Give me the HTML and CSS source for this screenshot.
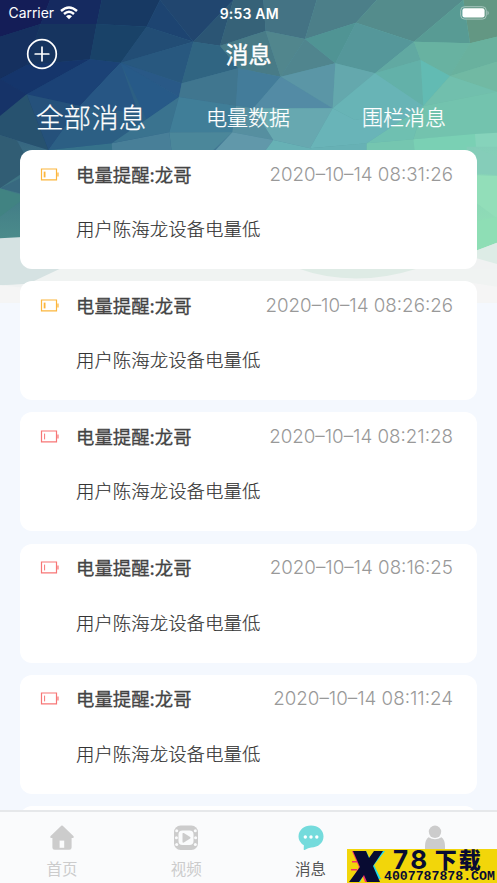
FILE: index.html
```html
<!DOCTYPE html>
<html lang="zh-CN">
<head>
<meta charset="utf-8">
<title>消息</title>
<link rel="stylesheet" href="styles.css">
</head>
<body>
<div class="phone">
<svg class="mesh" viewBox="0 0 1491 960" preserveAspectRatio="none" aria-hidden="true">
<defs>
<linearGradient id="base" x1="0" y1="0" x2="1" y2="0"><stop offset="0" stop-color="#1c3c6a"/><stop offset=".25" stop-color="#265680"/><stop offset=".5" stop-color="#4b839a"/><stop offset=".75" stop-color="#64aeab"/><stop offset="1" stop-color="#72bda5"/></linearGradient>
<linearGradient id="left" x1="0" y1="0" x2="0" y2="1"><stop offset="0" stop-color="#356480"/><stop offset="1" stop-color="#4b8c8b"/></linearGradient>
<linearGradient id="right" x1="0" y1="0" x2="0" y2="1"><stop offset="0" stop-color="#83cdb8"/><stop offset="1" stop-color="#94e2b5"/></linearGradient>
</defs>
<rect width="1491" height="960" fill="#f4f8fe"/>
<rect width="1491" height="500" fill="url(#base)"/>
<g>
<path fill="#141d57" d="M0 0H150L122 72 0 110z"/>
<path fill="#152a60" d="M150 0H305L290 72H122z"/>
<path fill="#15305f" d="M0 110L122 72 80 195 0 237z"/>
<path fill="#16345f" d="M122 72H290L270 178 80 195z"/>
<path fill="#173963" d="M305 0H480L440 80 290 72z"/>
<path fill="#194268" d="M290 72L440 80 362 188 270 178z"/>
<path fill="#1d4471" d="M480 0L580 125 440 80z"/>
<path fill="#21466f" d="M480 0H700L580 125z"/>
<path fill="#224d75" d="M440 80L580 125 362 188z"/>
<path fill="#15356b" d="M0 237L80 195 270 178 80 283z"/>
<path fill="#163368" d="M0 237L80 283 0 348z"/>
<path fill="#1b4276" d="M270 178L362 188 240 318 80 283z"/>
<path fill="#25517b" d="M80 283L240 318 145 450z"/>
<path fill="#27526f" d="M0 348L80 283 145 450 0 405z"/>
<path fill="#28587f" d="M362 188L580 125 545 250z"/>
<path fill="#295987" d="M362 188L545 250 537 291z"/>
<path fill="#275a88" d="M362 188L537 291 335 430 145 450 240 318z"/>
<path fill="#2c5f84" d="M362 188L440 360 335 430 145 450 240 318z"/>
<path fill="#275684" d="M362 188L415 340 240 318z"/>
<path fill="#3a738f" d="M537 291L508 397 335 430z"/>
<path fill="#2b5574" d="M700 0L660 137 580 125z"/>
<path fill="#366278" d="M700 0H790L797 93 660 137z"/>
<path fill="#447384" d="M790 0H950L915 117 797 93z"/>
<path fill="#4c7f89" d="M950 0H1130L1068 68 915 117z"/>
<path fill="#548c8c" d="M1130 0H1390L1242 125 1068 68z"/>
<path fill="#639783" d="M1390 0H1491V110L1410 130z"/>
<path fill="#589b94" d="M1390 0L1410 130 1242 125z"/>
<path fill="#306582" d="M580 125L660 137 715 205 545 250z"/>
<path fill="#487b87" d="M660 137L797 93 842 230 715 205z"/>
<path fill="#51868d" d="M797 93L915 117 842 230z"/>
<path fill="#50858e" d="M915 117L1006 190 842 230z"/>
<path fill="#509494" d="M915 117L1068 68 1006 190z"/>
<path fill="#55979a" d="M1068 68L1242 125 1125 220 1006 190z"/>
<path fill="#40768f" d="M545 250L715 205 708 318 537 291z"/>
<path fill="#437c9a" d="M715 205L842 230 760 325 708 318z"/>
<path fill="#5b96a6" d="M842 230L1006 190 998 325z"/>
<path fill="#538ba5" d="M842 230L998 325 760 325z"/>
<path fill="#64a8ad" d="M1006 190L1125 220 998 325z"/>
<path fill="#61a9a2" d="M1242 125L1262 180 1125 220z"/>
<path fill="#68b2a1" d="M1242 125L1410 130 1350 228 1262 180z"/>
<path fill="#69b19e" d="M1410 130L1491 110V185L1350 228z"/>
<path fill="#71b9a3" d="M1491 185V275L1350 228z"/>
<path fill="#63b1a9" d="M1125 220L1262 180 1270 318z"/>
<path fill="#62bbb3" d="M1262 180L1350 228 1270 318z"/>
<path fill="#68b4b6" d="M1125 220L1270 318 1065 360 998 325z"/>
<path fill="#71bfad" d="M1350 228L1491 275 1270 318z"/>
<path fill="#73c3ae" d="M1270 318L1491 275V400L1240 418z"/>
<path fill="#6fc0b1" d="M1270 318L1240 418 1100 430z"/>
<path fill="#407e98" d="M537 291L708 318 697 397H508z"/>
<path fill="#568fa0" d="M708 318L760 325 820 420 697 397z"/>
<path fill="#67a8b0" d="M760 325H998L930 445 820 420z"/>
<path fill="#69b4b8" d="M998 325L1065 360 1270 318 1100 430 930 445z"/>
<path fill="#36728b" d="M145 450L335 430 350 500H90z"/>
<path fill="#487f98" d="M335 430L508 397 520 500H340z"/>
<path fill="#4b879a" d="M508 397H697L630 460 520 500z"/>
<path fill="#6198aa" d="M697 397L820 420 760 500H600z"/>
<path fill="#67b1b5" d="M820 420L930 445 1100 430V500H760z"/>
<path fill="#75c6b0" d="M1100 430L1240 418 1290 500H1100z"/>
<path fill="#7ad0b4" d="M1240 418L1425 402 1491 500H1250z"/>
<path fill="#86d3bb" d="M1425 402L1491 398V530L1430 470z"/>
</g>
<path fill="url(#left)" d="M0 405L145 450 150 720H0z"/>
<path fill="#315d74" d="M0 405L50 421 95 500 0 565z"/>
<path fill="#386980" d="M0 565L80 525V585z"/>
<path fill="#418382" d="M0 565L80 590 0 650z"/>
<path fill="url(#right)" d="M1400 440H1491V760H1400z"/>
<path fill="#85cdb9" d="M1420 440L1491 470V525L1420 520z"/>
<path fill="#92deb9" d="M1420 525L1491 528V655L1430 610z"/>
<path fill="#8edeb5" d="M1420 665L1491 650V735L1420 760z"/>
<path fill="#d5e2e2" d="M0 715L180 705 600 740 1200 840 1491 728V870H0z"/>
<path fill="#ddece6" d="M1380 770L1491 728V800L1400 775z"/>
<path fill="#f0f2f2" d="M0 855L90 850 185 805H1380L1430 775 1491 792V908H0z"/>
<path fill="#d5e2e2" d="M0 790H210L115 850 0 856z"/>
<path fill="#f5f5f5" d="M0 856L100 866 420 843H1491V908H0z"/>
<path fill="#f0f3f2" d="M75 856L180 806H1491V860L1380 843z"/>
<path fill="#deebe5" d="M890 804Q1060 866 1250 806z"/>
</svg>

<header class="status">
<div class="carrier"><span>Carrier</span>
<svg class="wifi" viewBox="0 0 18 14"><path d="M1 5Q9-2 17 5M4 8Q9 3.4 14 8"/><path class="dot" d="M6 10.3Q9 7.7 12 10.3L9 13.3z"/></svg></div>
<strong>9:53 AM</strong>
<svg class="battery" viewBox="0 0 30 14"><rect class="case" x=".7" y=".7" width="25.6" height="12.4" rx="3.8"/><rect x="2.4" y="2.3" width="22.2" height="9.2" rx="2.2"/><path class="tip" d="M27.5 4.5Q30 7 27.5 9.3z"/></svg>
</header>
<nav class="title"><svg viewBox="0 0 32 32"><circle cx="16" cy="16" r="14.3"/><path d="M16 9.2V22.8M9.2 16H22.8"/></svg><h1>消息</h1></nav>
<nav class="tabs"><span class="current">全部消息</span><span>电量数据</span><span>围栏消息</span></nav>

<main class="list">
<article class="card amber"><svg viewBox="0 0 20 13"><path d="M1.5 1H16.5V11.8H1.5zM18 4.5V8.5"/><path class="level" d="M4.6 3.6V9.4"/></svg><h2>电量提醒:龙哥</h2><time>2020–10–14 08:31:26</time><p>用户陈海龙设备电量低</p></article>
<article class="card amber"><svg viewBox="0 0 20 13"><path d="M1.5 1H16.5V11.8H1.5zM18 4.5V8.5"/><path class="level" d="M4.6 3.6V9.4"/></svg><h2>电量提醒:龙哥</h2><time>2020–10–14 08:26:26</time><p>用户陈海龙设备电量低</p></article>
<article class="card red"><svg viewBox="0 0 20 13"><path d="M1.5 1H16.5V11.8H1.5zM18 4.5V8.5"/><path class="level" d="M4.6 3.6V9.4"/></svg><h2>电量提醒:龙哥</h2><time>2020–10–14 08:21:28</time><p>用户陈海龙设备电量低</p></article>
<article class="card red"><svg viewBox="0 0 20 13"><path d="M1.5 1H16.5V11.8H1.5zM18 4.5V8.5"/><path class="level" d="M4.6 3.6V9.4"/></svg><h2>电量提醒:龙哥</h2><time>2020–10–14 08:16:25</time><p>用户陈海龙设备电量低</p></article>
<article class="card red"><svg viewBox="0 0 20 13"><path d="M1.5 1H16.5V11.8H1.5zM18 4.5V8.5"/><path class="level" d="M4.6 3.6V9.4"/></svg><h2>电量提醒:龙哥</h2><time>2020–10–14 08:11:24</time><p>用户陈海龙设备电量低</p></article>
<article class="card"></article>
</main>

<footer class="tabbar">
<div class="tab"><svg viewBox="0 0 26 26"><path d="M13 .6Q13.8.6 14.5 1.4L24.6 11.3Q25.4 13 23.8 13H22.6V22.6Q22.6 24.8 20.4 24.8H5.6Q3.4 24.8 3.4 22.6V13H2.2Q.6 13 1.4 11.3L11.5 1.4Q12.2.6 13 .6z"/><path class="hole" d="M10.6 15.6H15.2V22.8H10.6z"/></svg><span>首页</span></div>
<div class="tab"><svg viewBox="0 0 26 26"><rect x="1" y=".6" width="24" height="24.4" rx="6.5"/><rect class="hole" x="5.5" y="5.5" width="15" height="14.6" rx="4"/><path d="M9.5 8.7Q9.5 7.5 10.8 8.1L17.2 12Q18 12.8 17.2 13.5L10.8 17.5Q9.5 18 9.5 16.8z"/><g class="hole"><circle cx="3.7" cy="5.8" r="1.5"/><circle cx="3.4" cy="12.7" r="1.5"/><circle cx="3.7" cy="19.5" r="1.5"/><circle cx="22.3" cy="5.8" r="1.5"/><circle cx="22.6" cy="12.7" r="1.5"/><circle cx="22.3" cy="19.5" r="1.5"/></g></svg><span>视频</span></div>
<div class="tab active"><svg viewBox="0 0 26 26"><path d="M13 .6C20 .6 25.5 5.2 25.5 11.6S20 22.5 13.5 22.5Q10.5 22.4 6.6 25Q5.5 25.4 5.7 24L5.9 20.3Q.5 17 .5 11.5C.5 5.2 6 .6 13 .6z"/><g class="dots"><circle cx="7.3" cy="12" r="1.7"/><circle cx="13" cy="12" r="1.7"/><circle cx="18.8" cy="12" r="1.7"/></g></svg><span>消息</span></div>
<div class="tab"><svg viewBox="0 0 26 26"><circle cx="13" cy="6.8" r="6.2"/><path d="M6.5 12.3Q13 16.3 19.5 12.3Q23 15 23 21V24Q23 26 20 26H6Q3 26 3 24V21Q3 15 6.5 12.3z"/></svg></div>
</footer>
<aside class="mark">
<svg class="mark-x" viewBox="0 0 36 34"><path class="cyan" d="M7 2H17L21 10 26 2H36L25 16 32 30H18L15 25 11 33H1L12 19z"/><path class="pink" d="M3 2H14L18 12 24 8 20 17 30 33H16L13 25 8 33H2L10 18zM3 12H8V13.5H3zM2 20H8V21.5H2z"/><path class="ink" d="M4 2H17L20 9 25 2H34L24 17 31 33H18L15 26 10 33H0L11 18z"/></svg>
<div class="mark-text"><div class="mark-name"><b>78</b><b class="cjk">下载</b></div><small>4007787878.COM</small></div>
</aside>
</div>
</body>
</html>
```

FILE: styles.css
```css
* { box-sizing: border-box; }
body { margin: 0; font-family: Inter, "Noto Sans CJK SC", sans-serif; }
.phone { position: relative; width: 497px; height: 883px; overflow: hidden; background: #f4f8fe; }
.mesh { position: absolute; top: 0; left: 0; width: 497px; height: 320px; }
.status, .title, .tabs, .list { position: relative; color: #fff; }
.status { height: 26px; display: grid; grid-template-columns: 1fr auto 1fr; align-items: center; padding: 0 7px 0 8.5px; font-size: 14px; }
.status strong { font-size: 14px; font-weight: 600; letter-spacing: .2px; }
.carrier { display: flex; align-items: center; gap: 6px; margin-top: -1px; font-size: 13.9px; }
.wifi { width: 18px; height: 14px; fill: none; stroke: #fff; stroke-width: 2.4; }
.wifi .dot { fill: #fff; stroke: none; }
.battery { width: 30px; height: 14px; justify-self: end; fill: #fff; margin-top: -1px; }
.battery .case { fill: none; stroke: #a7c5bd; stroke-width: 1; }
.battery .tip { fill: #a7c5bd; }
.title { height: 60px; display: grid; grid-template-columns: 1fr auto 1fr; align-items: center; padding: 0 25.5px; }
.title svg { width: 32px; height: 32px; fill: none; stroke: #fff; stroke-width: 1.7; stroke-linecap: round; margin-top: -4px; }
.title h1 { margin: -3px 0 0; font-size: 23px; font-weight: 400; line-height: 34px; -webkit-text-stroke: .45px; }
.tabs { height: 64px; display: grid; grid-template-columns: 170px 156px 84px; align-items: center; padding: 0 0 5px 36px; font-size: 21px; white-space: nowrap; }
.tabs .current { font-size: 27.6px; }
.tabs span { font-weight: 300; -webkit-text-stroke: .25px; }
.list { display: grid; grid-auto-rows: 119px; gap: 12.2px; padding: 0 20px; }
.card { background: #fff; border-radius: 12px; color: #444; display: grid; grid-template-columns: 36px 1fr auto; grid-template-rows: 48px 60px; align-items: center; padding: 0 24px 0 20px; }
.card svg { width: 20px; height: 13px; fill: none; stroke: currentColor; stroke-width: 1.2; }
.card .level { stroke-width: 1.8; }
.amber svg { color: #fcb63d; }
.red svg { color: #f77676; }
.red .level { stroke-width: 1; }
.card h2 { margin: -1px 0 0; font-size: 18.4px; font-weight: 400; white-space: nowrap; -webkit-text-stroke: .3px; }
.card time { font-size: 18.75px; font-weight: 300; color: #999; white-space: nowrap; }
.card p { grid-column: 2 / 4; margin: 0; font-size: 18.45px; font-weight: 300; color: #333; -webkit-text-stroke: .15px; }
.tabbar { position: absolute; left: 0; right: 0; bottom: 0; height: 73px; display: grid; grid-template-columns: repeat(4, 1fr); border-top: 2px solid #e6e8ea; background: #fafbfc; }
.tab { display: flex; flex-direction: column; align-items: center; padding-top: 13px; color: #ccc; font-size: 15.5px; line-height: 24px; }
.tab svg { width: 26px; height: 26px; flex: none; fill: #ccc; margin-bottom: 7px; }
.tab .hole { fill: #fafbfc; }
.tab.active { color: #555; }
.tab.active svg { fill: #74dbdc; }
.tab .dots { fill: #fff; }
.mark { position: absolute; right: 0; bottom: 0; width: 150px; height: 34px; display: flex; background: #f2d60a; color: #080b32; }
.mark-x { width: 36px; height: 34px; flex: none; margin-left: 2px; }
.cyan { fill: #20dce8; }
.pink { fill: #f32e6b; }
.ink { fill: #080b32; }
.mark-text { display: grid; grid-template-rows: 21px 13px; width: 112px; margin-left: -1px; }
.mark-name { display: flex; align-items: center; gap: 5px; padding-left: 9px; line-height: 20px; }
.mark-name b { font-size: 26px; font-weight: 700; letter-spacing: 2.5px; white-space: nowrap; }
.mark-name .cjk { font-size: 22px; letter-spacing: 2px; line-height: 20px; font-weight: 900; }
.mark-text small { font: 700 13.2px/13px "Liberation Mono", monospace; white-space: nowrap; }
```
